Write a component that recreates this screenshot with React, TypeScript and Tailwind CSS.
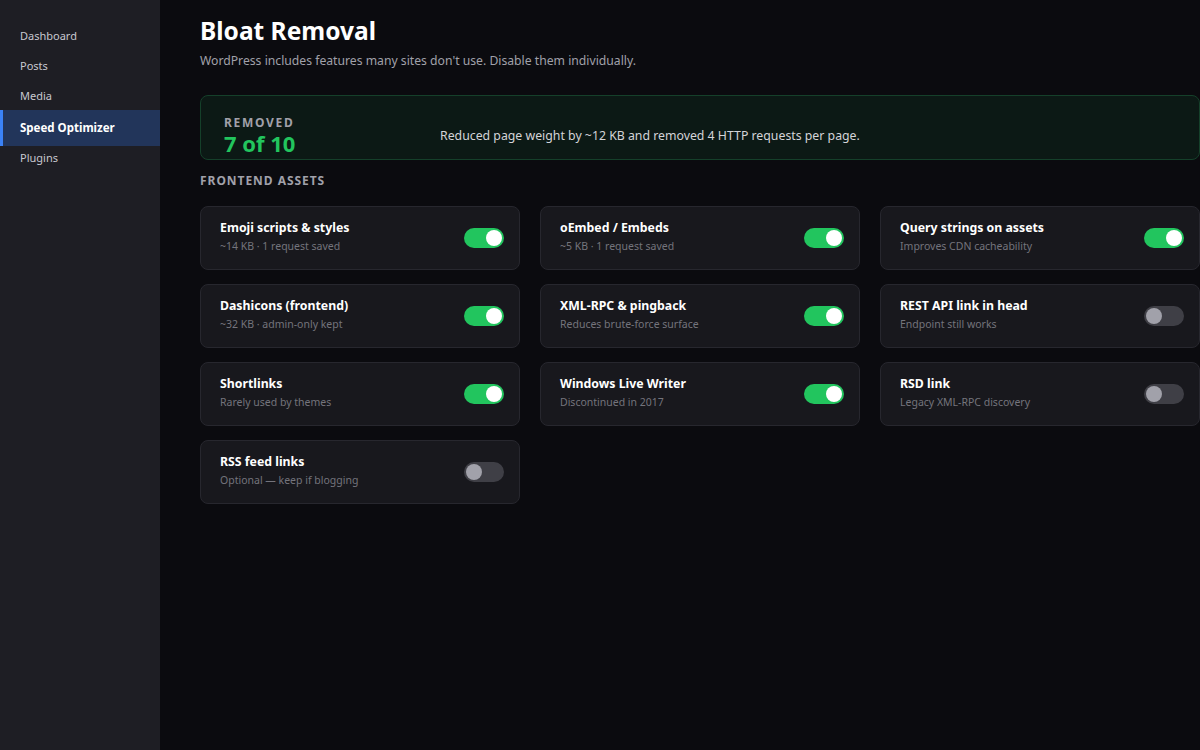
import React from "react";

type Item = { title: string; desc: string; on: boolean };

const items: Item[] = [
    { title: "Emoji scripts & styles", desc: "~14 KB · 1 request saved", on: true },
    { title: "oEmbed / Embeds", desc: "~5 KB · 1 request saved", on: true },
    { title: "Query strings on assets", desc: "Improves CDN cacheability", on: true },
    { title: "Dashicons (frontend)", desc: "~32 KB · admin-only kept", on: true },
    { title: "XML-RPC & pingback", desc: "Reduces brute-force surface", on: true },
    { title: "REST API link in head", desc: "Endpoint still works", on: false },
    { title: "Shortlinks", desc: "Rarely used by themes", on: true },
    { title: "Windows Live Writer", desc: "Discontinued in 2017", on: true },
    { title: "RSD link", desc: "Legacy XML-RPC discovery", on: false },
    { title: "RSS feed links", desc: "Optional — keep if blogging", on: false },
];

function Toggle({ on }: { on: boolean }) {
    return (
        <div
            className={
                on
                    ? "w-10 h-5 rounded-full bg-[#22c55e] flex items-center justify-end px-[2px] shrink-0"
                    : "w-10 h-5 rounded-full bg-[#3f3f46] flex items-center justify-start px-[2px] shrink-0"
            }
        >
            <div className={on ? "w-4 h-4 rounded-full bg-white" : "w-4 h-4 rounded-full bg-[#a1a1aa]"} />
        </div>
    );
}

export default function App() {
    return (
        <div
            className="flex h-[750px] w-full overflow-hidden bg-[#0b0b0f]"
            style={{ fontFamily: '"Noto Sans", "Open Sans", sans-serif' }}
        >
            <aside className="w-40 shrink-0 bg-[#1e1e24] pt-[21px]">
                <div className="h-[30px] flex items-center px-5 text-[11px] text-[#c8c8d0]">Dashboard</div>
                <div className="h-[30px] flex items-center px-5 text-[11px] text-[#c8c8d0]">Posts</div>
                <div className="h-[30px] flex items-center px-5 text-[11px] text-[#c8c8d0]">Media</div>
                <div className="h-9 -mt-px flex items-center pl-[17px] pr-5 text-[11.5px] font-bold text-white bg-[#22355a] border-l-[3px] border-[#3b82f6]">
                    Speed Optimizer
                </div>
                <div className="h-[30px] -mt-[3px] flex items-center px-5 text-[11px] text-[#c8c8d0]">Plugins</div>
            </aside>

            <main className="flex-1 pl-10 pt-[15px]">
                <div className="w-[1000px]">
                    <h1 className="text-[24.5px] leading-[32px] font-bold text-white">Bloat Removal</h1>
                    <p className="mt-1 text-[12.2px] leading-5 text-[#a1a1aa]">
                        WordPress includes features many sites don't use. Disable them individually.
                    </p>

                    <div className="mt-6 h-[65px] rounded-lg border border-[#15402a] bg-[#0c1915] pl-[23px] pt-5 pb-[3px] flex items-center">
                        <div className="w-[216px] shrink-0">
                            <div className="text-[12px] leading-[14px] font-bold tracking-[0.14em] text-[#a1a1aa]">REMOVED</div>
                            <div className="text-[22px] leading-[26px] font-bold text-[#22c55e]">7 of 10</div>
                        </div>
                        <div className="text-[12.3px] leading-5 text-[#d4d4d8]">
                            Reduced page weight by ~12 KB and removed 4 HTTP requests per page.
                        </div>
                    </div>

                    <h2 className="mt-[13px] text-[12px] leading-4 font-bold tracking-[0.08em] text-[#a1a1aa]">FRONTEND ASSETS</h2>

                    <div className="mt-[17px] grid grid-cols-3 gap-x-5 gap-y-[14px]">
                        {items.map((item) => (
                            <div
                                key={item.title}
                                className="h-16 rounded-lg border border-[#27272e] bg-[#18181d] pl-[19px] pr-[15px] flex items-center justify-between"
                            >
                                <div className="self-start pt-3">
                                    <div className="text-[12.3px] leading-[18px] font-bold text-white">{item.title}</div>
                                    <div className="mt-px text-[10.5px] leading-4 text-[#74747c]">{item.desc}</div>
                                </div>
                                <Toggle on={item.on} />
                            </div>
                        ))}
                    </div>
                </div>
            </main>
        </div>
    );
}
